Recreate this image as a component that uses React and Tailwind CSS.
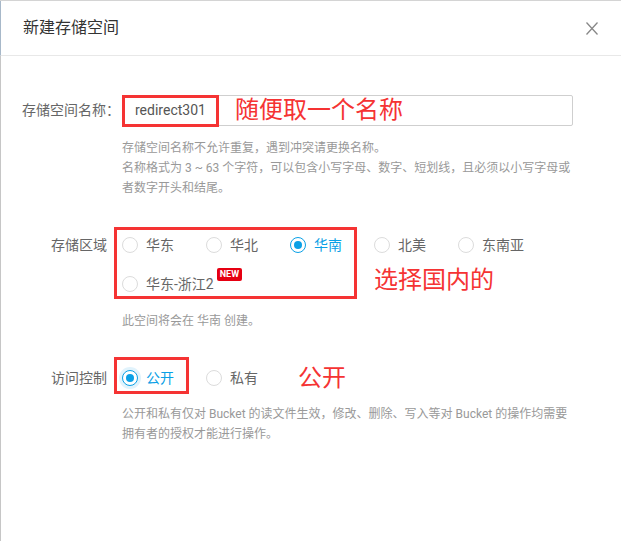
const FONT = { fontFamily: '"Roboto", "Noto Sans CJK SC", sans-serif' };

function Radio({ checked, halo }) {
  return (
    <span
      className={`w-[16px] h-[16px] rounded-full border flex items-center justify-center shrink-0 bg-white ${
        checked ? "border-[#0aa0e6]" : "border-[#dcdcdc]"
      } ${halo ? "shadow-[0_0_0_3px_rgba(10,160,230,0.12)]" : ""}`}
    >
      {checked && <span className="w-[8px] h-[8px] rounded-full bg-[#0aa0e6]" />}
    </span>
  );
}

function Option({ label, checked, halo, badge }) {
  return (
    <div className="w-[84px] h-[30px] flex items-center gap-[8px]">
      <Radio checked={checked} halo={halo} />
      <span className={`text-[14px] whitespace-nowrap ${checked ? "text-[#0aa0e6]" : "text-[#666]"}`}>
        {label}
      </span>
      {badge && (
        <span className="relative -top-[10px] -ml-[5px] px-[3px] h-[13px] leading-[13px] bg-[#e60012] text-white text-[9px] font-bold rounded-[2px]">
          NEW
        </span>
      )}
    </div>
  );
}

export default function App() {
  const regions = ["华东", "华北", "华南", "北美", "东南亚"];

  return (
    <div className="w-[621px] h-[541px] bg-white border-t border-[#d4d4d4] flex flex-col" style={FONT}>
      {/* header */}
      <div className="h-[55px] shrink-0 flex items-center justify-between pl-[22px] pr-[23px] border-l border-[#a7b8c9] border-b border-b-[#e8e8e8]">
        <h2 className="text-[16px] text-[#333]">新建存储空间</h2>
        <svg width="12" height="13" viewBox="0 0 12 13">
          <path d="M0.5 0.5 L11.5 12.5 M11.5 0.5 L0.5 12.5" stroke="#888" strokeWidth="1.3" fill="none" />
        </svg>
      </div>

      {/* body */}
      <div className="flex-1 border-l border-[#c6c6c6] pt-[39px]">
        {/* name */}
        <div className="flex">
          <div className="w-[121px] shrink-0 text-right text-[14px] text-[#666] leading-[31px] pr-[2px]">
            存储空间名称：
          </div>
          <div className="w-[451px]">
            <div className="relative h-[31px] border border-[#cfcfcf] rounded-[2px] flex items-center pl-[12px] text-[14px] text-[#555]">
              redirect301
              <div className="absolute -left-[1px] -top-[1px] w-[97px] h-[32px] border-[3px] border-[#f53333]" />
              <span className="absolute left-[112px] top-[-3px] text-[24px] leading-[34px] text-[#f53333]">
                随便取一个名称
              </span>
            </div>
            <div className="mt-[12px] text-[12px] leading-[20px] text-[#999]">
              <p className="whitespace-nowrap">存储空间名称不允许重复，遇到冲突请更换名称。</p>
              <p className="whitespace-nowrap">名称格式为 3 ~ 63 个字符，可以包含小写字母、数字、短划线，且必须以小写字母或</p>
              <p className="whitespace-nowrap">者数字开头和结尾。</p>
            </div>
          </div>
        </div>

        {/* region */}
        <div className="flex mt-[32px]">
          <div className="w-[121px] shrink-0 text-right text-[14px] text-[#666] leading-[30px] pr-[15px]">
            存储区域
          </div>
          <div className="w-[451px]">
            <div className="relative">
              <div className="flex flex-wrap gap-y-[9px]">
                {regions.map((r) => (
                  <Option key={r} label={r} checked={r === "华南"} />
                ))}
                <Option label="华东-浙江2" badge />
              </div>
              <div className="absolute -left-[8px] -top-[3px] w-[243px] h-[72px] border-[3px] border-[#f53333]" />
              <span className="absolute left-[252px] top-[33px] text-[24px] leading-[34px] text-[#f53333] whitespace-nowrap">
                选择国内的
              </span>
            </div>
            <p className="mt-[12px] text-[12px] leading-[20px] text-[#999]">此空间将会在 华南 创建。</p>
          </div>
        </div>

        {/* access */}
        <div className="flex mt-[32px]">
          <div className="w-[121px] shrink-0 text-right text-[14px] text-[#666] leading-[30px] pr-[15px]">
            访问控制
          </div>
          <div className="w-[451px]">
            <div className="relative flex">
              <Option label="公开" checked halo />
              <Option label="私有" />
              <div className="absolute -left-[8px] -top-[6px] w-[75px] h-[37px] border-[3px] border-[#f53333]" />
              <span className="absolute left-[176px] top-[-2px] text-[24px] leading-[34px] text-[#f53333]">
                公开
              </span>
            </div>
            <div className="mt-[11px] text-[12px] leading-[20px] text-[#999]">
              <p className="whitespace-nowrap">公开和私有仅对 Bucket 的读文件生效，修改、删除、写入等对 Bucket 的操作均需要</p>
              <p className="whitespace-nowrap">拥有者的授权才能进行操作。</p>
            </div>
          </div>
        </div>
      </div>
    </div>
  );
}
